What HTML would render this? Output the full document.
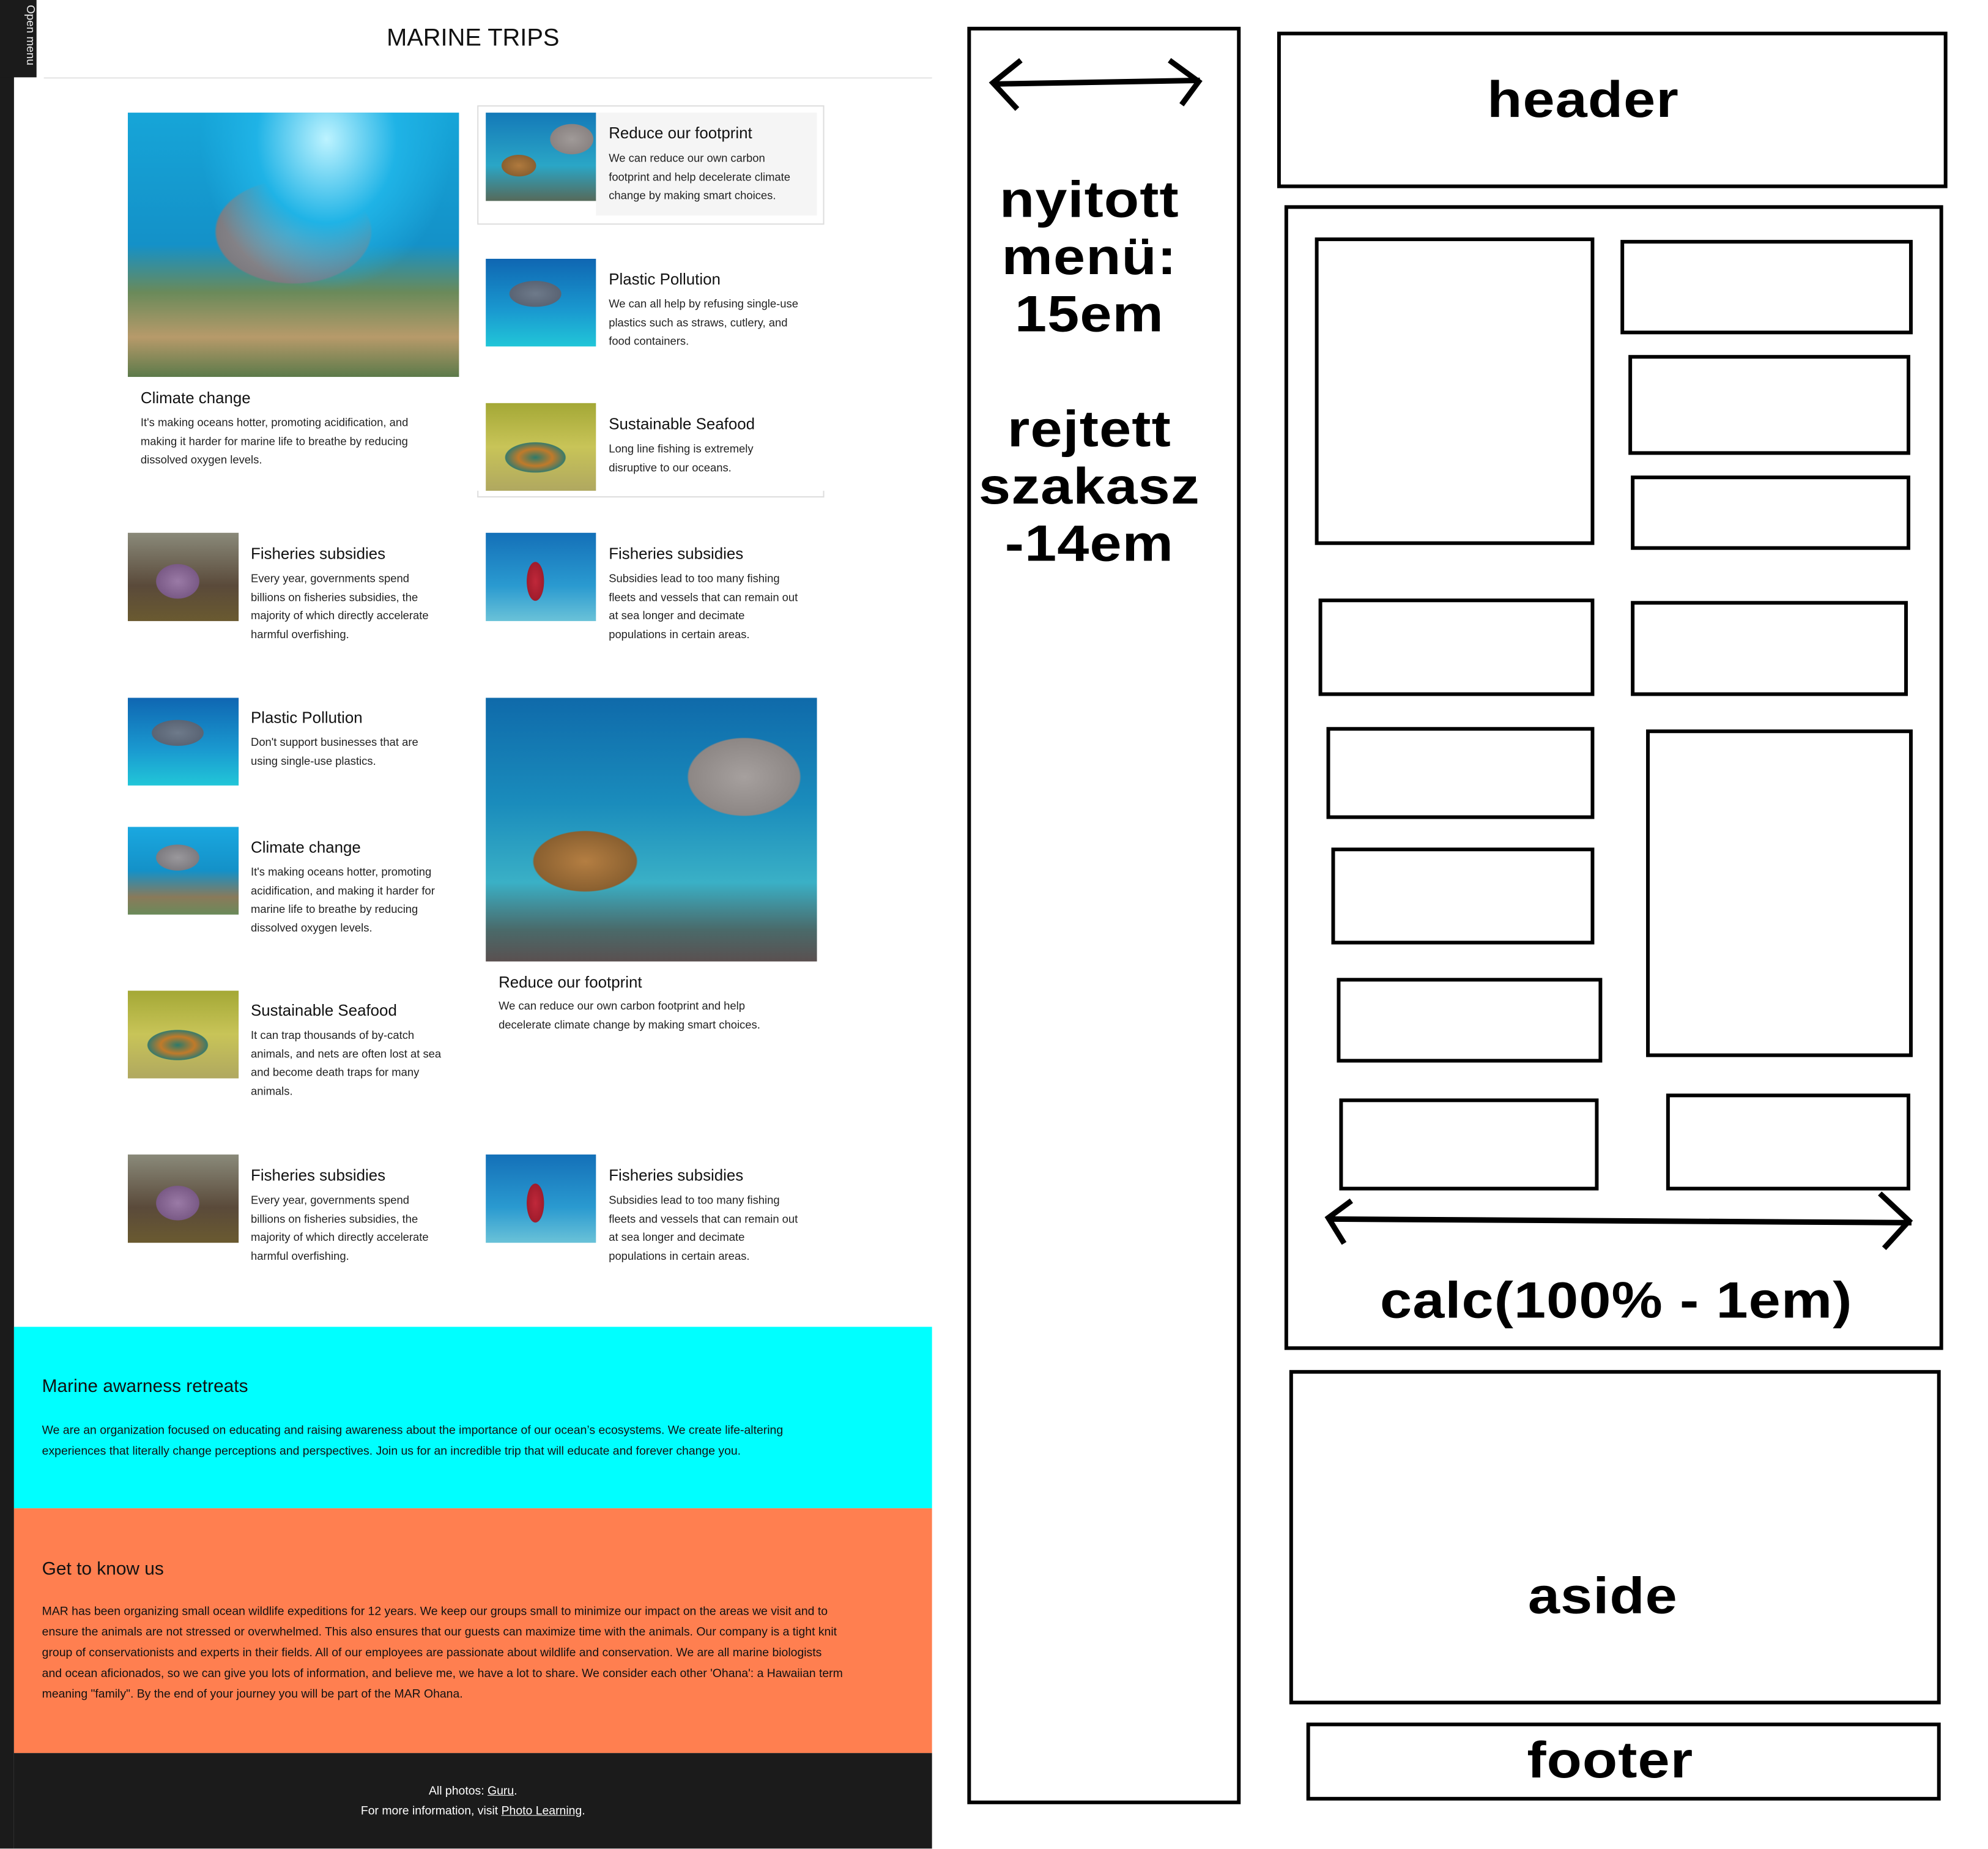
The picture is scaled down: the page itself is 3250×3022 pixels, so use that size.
<!DOCTYPE html>
<html style="overflow:hidden;height:3022px"><head><meta charset="utf-8"><style>
*{margin:0;padding:0;box-sizing:border-box}
body{width:3250px;height:3022px;position:relative;background:#fff;font-family:"Liberation Sans",sans-serif;color:#111;overflow:hidden}
#w{position:absolute;left:0;top:0;width:3265px;height:3036px;overflow:hidden;transform:scale(0.9952);transform-origin:0 0}
.a{position:absolute}
.strip{left:0;top:0;width:23px;height:3036px;background:#1b1b1b}
.t{position:absolute;font-size:26px;white-space:nowrap;color:#111}
.p{position:absolute;font-size:18.5px;line-height:30.5px;white-space:nowrap;color:#222}
.img{position:absolute}
.bx{position:absolute;border:6px solid #000}
.big{position:absolute;font-weight:900;font-size:84px;color:#000;text-align:center;letter-spacing:1px;transform:scaleX(1.12);white-space:nowrap}
</style></head><body><div id="w">
<div class="a strip"></div>
<div class="a" style="left:0;top:0;width:60px;height:127px;background:#1b1b1b"></div>
<div class="a" style="left:16px;top:8px;width:44px;height:110px;color:#eee;font-size:19px;writing-mode:vertical-rl;white-space:nowrap">Open menu</div>
<div class="a" style="left:72px;top:127px;width:1459px;height:2px;background:#e2e2e2"></div>
<div class="a" style="left:560px;top:40px;width:434px;text-align:center;font-size:40px;color:#111">MARINE TRIPS</div>

<div class="img" style="left:210px;top:185px;width:544px;height:434px;background:radial-gradient(ellipse at 60% 10%,#bdf3ff 0,#1fb3e6 25%,transparent 45%),radial-gradient(ellipse 180px 120px at 50% 45%,#9c9a9e 0,#7d7b80 70%,transparent 72%),linear-gradient(180deg,#16a5d8 0%,#1491c8 50%,#6a8a5a 68%,#b79a6a 85%,#5c7a4a 100%)"></div>
<div class="t" style="left:231px;top:638px">Climate change</div>
<div class="p" style="left:231px;top:679px">It's making oceans hotter, promoting acidification, and<br>making it harder for marine life to breathe by reducing<br>dissolved oxygen levels.</div>

<div class="a" style="left:784px;top:173px;width:570px;height:196px;border:2px solid #ddd"></div>
<div class="a" style="left:979px;top:185px;width:363px;height:169px;background:#f5f5f5"></div>
<div class="img" style="left:798px;top:185px;width:181px;height:145px;background:radial-gradient(ellipse 50px 35px at 78% 30%,#a09a98 0,#8a8382 70%,transparent 72%),radial-gradient(ellipse 40px 25px at 30% 60%,#b07a3e 0,#8a6030 70%,transparent 72%),linear-gradient(180deg,#1479b8,#2aa6c6 60%,#566a5a 100%)"></div>
<div class="t" style="left:1000px;top:203px">Reduce our footprint</div>
<div class="p" style="left:1000px;top:245px">We can reduce our own carbon<br>footprint and help decelerate climate<br>change by making smart choices.</div>

<div class="img" style="left:798px;top:425px;width:181px;height:144px;background:radial-gradient(ellipse 60px 30px at 45% 40%,#6e7a8a 0,#5a6474 70%,transparent 72%),linear-gradient(180deg,#0f66b2,#1a9ad0 60%,#21c6d8 100%)"></div>
<div class="t" style="left:1000px;top:443px">Plastic Pollution</div>
<div class="p" style="left:1000px;top:484px">We can all help by refusing single-use<br>plastics such as straws, cutlery, and<br>food containers.</div>

<div class="img" style="left:798px;top:662px;width:181px;height:144px;background:radial-gradient(ellipse 70px 35px at 45% 62%,#2d7a6a 0,#c07a2a 40%,#3a7a6a 70%,transparent 72%),linear-gradient(180deg,#a4a836,#c8c458 50%,#b0a860 100%)"></div>
<div class="t" style="left:1000px;top:681px">Sustainable Seafood</div>
<div class="p" style="left:1000px;top:722px">Long line fishing is extremely<br>disruptive to our oceans.</div>
<div class="a" style="left:784px;top:815px;width:570px;height:2px;background:#ddd"></div>
<div class="a" style="left:784px;top:806px;width:2px;height:10px;background:#ddd"></div>
<div class="a" style="left:1352px;top:806px;width:2px;height:10px;background:#ddd"></div>

<div class="img" style="left:210px;top:875px;width:182px;height:145px;background:radial-gradient(ellipse 50px 40px at 45% 55%,#9a7aa6 0,#7a5a86 70%,transparent 72%),linear-gradient(180deg,#8a8a7a,#5a4a3a 60%,#6a5a30 100%)"></div>
<div class="t" style="left:412px;top:894px">Fisheries subsidies</div>
<div class="p" style="left:412px;top:935px">Every year, governments spend<br>billions on fisheries subsidies, the<br>majority of which directly accelerate<br>harmful overfishing.</div>
<div class="img" style="left:798px;top:875px;width:181px;height:145px;background:radial-gradient(ellipse 20px 45px at 45% 55%,#c0283a 0,#a01c2c 70%,transparent 72%),linear-gradient(180deg,#1470b8,#2a9ad0 60%,#6ac2d8 100%)"></div>
<div class="t" style="left:1000px;top:894px">Fisheries subsidies</div>
<div class="p" style="left:1000px;top:935px">Subsidies lead to too many fishing<br>fleets and vessels that can remain out<br>at sea longer and decimate<br>populations in certain areas.</div>

<div class="img" style="left:210px;top:1146px;width:182px;height:144px;background:radial-gradient(ellipse 60px 30px at 45% 40%,#6e7a8a 0,#5a6474 70%,transparent 72%),linear-gradient(180deg,#0f66b2,#1a9ad0 60%,#21c6d8 100%)"></div>
<div class="t" style="left:412px;top:1163px">Plastic Pollution</div>
<div class="p" style="left:412px;top:1204px">Don't support businesses that are<br>using single-use plastics.</div>

<div class="img" style="left:798px;top:1146px;width:544px;height:433px;background:radial-gradient(ellipse 130px 90px at 78% 30%,#a6a09e 0,#8d8785 70%,transparent 72%),radial-gradient(ellipse 120px 70px at 30% 62%,#b47e42 0,#8a6030 70%,transparent 72%),linear-gradient(180deg,#0f6aaa 0%,#1a8cbc 40%,#3ab0c6 70%,#4a6a6a 88%,#5a5050 100%)"></div>
<div class="t" style="left:819px;top:1598px">Reduce our footprint</div>
<div class="p" style="left:819px;top:1637px">We can reduce our own carbon footprint and help<br>decelerate climate change by making smart choices.</div>

<div class="img" style="left:210px;top:1358px;width:182px;height:144px;background:radial-gradient(ellipse 50px 30px at 45% 35%,#9a989c 0,#7d7b80 70%,transparent 72%),linear-gradient(180deg,#1aa8e0,#1491c8 50%,#8a7a5a 80%,#6a8a5a 100%)"></div>
<div class="t" style="left:412px;top:1376px">Climate change</div>
<div class="p" style="left:412px;top:1417px">It's making oceans hotter, promoting<br>acidification, and making it harder for<br>marine life to breathe by reducing<br>dissolved oxygen levels.</div>

<div class="img" style="left:210px;top:1627px;width:182px;height:144px;background:radial-gradient(ellipse 70px 35px at 45% 62%,#2d7a6a 0,#c07a2a 40%,#3a7a6a 70%,transparent 72%),linear-gradient(180deg,#a4a836,#c8c458 50%,#b0a860 100%)"></div>
<div class="t" style="left:412px;top:1644px">Sustainable Seafood</div>
<div class="p" style="left:412px;top:1685px">It can trap thousands of by-catch<br>animals, and nets are often lost at sea<br>and become death traps for many<br>animals.</div>

<div class="img" style="left:210px;top:1896px;width:182px;height:145px;background:radial-gradient(ellipse 50px 40px at 45% 55%,#9a7aa6 0,#7a5a86 70%,transparent 72%),linear-gradient(180deg,#8a8a7a,#5a4a3a 60%,#6a5a30 100%)"></div>
<div class="t" style="left:412px;top:1915px">Fisheries subsidies</div>
<div class="p" style="left:412px;top:1956px">Every year, governments spend<br>billions on fisheries subsidies, the<br>majority of which directly accelerate<br>harmful overfishing.</div>
<div class="img" style="left:798px;top:1896px;width:181px;height:145px;background:radial-gradient(ellipse 20px 45px at 45% 55%,#c0283a 0,#a01c2c 70%,transparent 72%),linear-gradient(180deg,#1470b8,#2a9ad0 60%,#6ac2d8 100%)"></div>
<div class="t" style="left:1000px;top:1915px">Fisheries subsidies</div>
<div class="p" style="left:1000px;top:1956px">Subsidies lead to too many fishing<br>fleets and vessels that can remain out<br>at sea longer and decimate<br>populations in certain areas.</div>

<div class="a" style="left:23px;top:2179px;width:1508px;height:298px;background:#00ffff"></div>
<div class="t" style="left:69px;top:2260px;font-size:30px">Marine awarness retreats</div>
<div class="p" style="left:69px;top:2332px;font-size:19.5px;line-height:34px;color:#111">We are an organization focused on educating and raising awareness about the importance of our ocean’s ecosystems. We create life-altering<br>experiences that literally change perceptions and perspectives. Join us for an incredible trip that will educate and forever change you.</div>
<div class="a" style="left:23px;top:2477px;width:1508px;height:402px;background:#ff7f50"></div>
<div class="t" style="left:69px;top:2560px;font-size:30px">Get to know us</div>
<div class="p" style="left:69px;top:2629px;font-size:19.5px;line-height:34px;color:#111">MAR has been organizing small ocean wildlife expeditions for 12 years. We keep our groups small to minimize our impact on the areas we visit and to<br>ensure the animals are not stressed or overwhelmed. This also ensures that our guests can maximize time with the animals. Our company is a tight knit<br>group of conservationists and experts in their fields. All of our employees are passionate about wildlife and conservation. We are all marine biologists<br>and ocean aficionados, so we can give you lots of information, and believe me, we have a lot to share. We consider each other 'Ohana': a Hawaiian term<br>meaning "family". By the end of your journey you will be part of the MAR Ohana.</div>
<div class="a" style="left:23px;top:2879px;width:1508px;height:157px;background:#1b1b1b"></div>
<div class="p" style="left:23px;width:1508px;top:2925px;text-align:center;color:#fff;font-size:19.5px;line-height:33px">All photos: <u>Guru</u>.<br>For more information, visit <u>Photo Learning</u>.</div>

<div class="bx" style="left:1589px;top:44px;width:449px;height:2919px"></div>
<svg class="a" style="left:1589px;top:44px" width="449" height="200"><g stroke="#000" stroke-width="9" fill="none"><line x1="42" y1="94" x2="382" y2="88"/><polyline points="88,55 42,92 82,135"/><polyline points="332,55 380,90 352,128"/></g></svg>
<div class="big" style="left:1565px;width:449px;top:280px;line-height:94px">nyitott<br>menü:<br>15em</div>
<div class="big" style="left:1565px;width:449px;top:657px;line-height:94px">rejtett<br>szakasz<br>-14em</div>
<div class="bx" style="left:2098px;top:52px;width:1101px;height:257px"></div>
<div class="big" style="left:2050px;width:1101px;top:108px;line-height:110px">header</div>
<div class="bx" style="left:2110px;top:337px;width:1082px;height:1880px"></div>
<div class="bx" style="left:2160px;top:390px;width:459px;height:505px"></div>
<div class="bx" style="left:2662px;top:394px;width:480px;height:155px"></div>
<div class="bx" style="left:2675px;top:583px;width:463px;height:164px"></div>
<div class="bx" style="left:2679px;top:781px;width:459px;height:122px"></div>
<div class="bx" style="left:2166px;top:983px;width:453px;height:160px"></div>
<div class="bx" style="left:2679px;top:987px;width:455px;height:156px"></div>
<div class="bx" style="left:2179px;top:1194px;width:440px;height:151px"></div>
<div class="bx" style="left:2704px;top:1198px;width:438px;height:538px"></div>
<div class="bx" style="left:2187px;top:1392px;width:432px;height:159px"></div>
<div class="bx" style="left:2196px;top:1606px;width:436px;height:139px"></div>
<div class="bx" style="left:2200px;top:1804px;width:426px;height:151px"></div>
<div class="bx" style="left:2737px;top:1796px;width:401px;height:159px"></div>
<svg class="a" style="left:2170px;top:1950px" width="990" height="120"><g stroke="#000" stroke-width="9" fill="none"><line x1="12" y1="52" x2="970" y2="58"/><polyline points="50,22 12,50 38,92"/><polyline points="918,10 966,55 925,100"/></g></svg>
<div class="big" style="left:2095px;width:1120px;top:2085px;line-height:100px">calc(100% - 1em)</div>
<div class="bx" style="left:2118px;top:2250px;width:1070px;height:549px"></div>
<div class="big" style="left:2098px;width:1070px;top:2570px;line-height:100px">aside</div>
<div class="bx" style="left:2146px;top:2829px;width:1042px;height:128px"></div>
<div class="big" style="left:2124px;width:1042px;top:2840px;line-height:100px">footer</div>
</div></body></html>
